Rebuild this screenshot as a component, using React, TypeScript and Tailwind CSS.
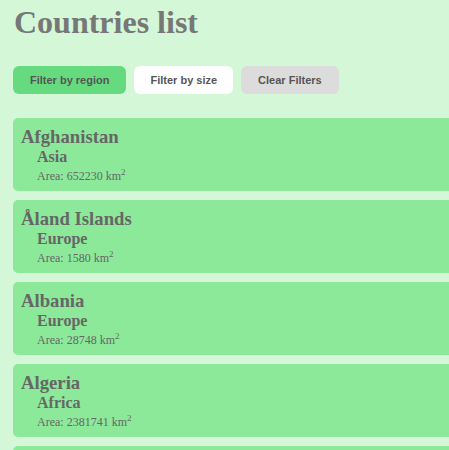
import React from "react";

const countries = [
  { name: "Afghanistan", region: "Asia", area: 652230 },
  { name: "Åland Islands", region: "Europe", area: 1580 },
  { name: "Albania", region: "Europe", area: 28748 },
  { name: "Algeria", region: "Africa", area: 2381741 },
  { name: "American Samoa", region: "Oceania", area: 199 },
];

export default function App() {
  return (
    <div className="min-h-screen w-full overflow-hidden bg-[#d4f8d7] pl-[13px] font-['Liberation_Serif',serif]">
      <h1 className="pt-[4px] text-[32px] leading-[37px] font-bold text-[#777777] ml-px">Countries list</h1>
      <div className="mt-[25px] flex gap-2 font-['Liberation_Sans',Arial,sans-serif] text-[11px] font-bold text-[#555555]">
        <button className="h-[28px] rounded-[6px] bg-[#66da7e] px-[17px]">Filter by region</button>
        <button className="h-[28px] rounded-[6px] bg-white px-[16px]">Filter by size</button>
        <button className="h-[28px] rounded-[6px] bg-[#dcdcdc] px-[17px]">Clear Filters</button>
      </div>
      <div className="mt-[24px] flex flex-col gap-[9px]">
        {countries.map((c) => (
          <div key={c.name} className="h-[73px] rounded-l-[5px] bg-[#8ce99a] pl-[8px] pt-[8px] text-[#666666]">
            <div className="text-[18.72px] leading-[21px] font-bold">{c.name}</div>
            <div className="pl-[16px] text-[16px] leading-[19px] font-bold">{c.region}</div>
            <div className="mt-[3px] pl-[16px] text-[12px] leading-[15px]">
              Area: {c.area} km
              <span className="relative top-[-5px] text-[9px] leading-none">2</span>
            </div>
          </div>
        ))}
      </div>
    </div>
  );
}
